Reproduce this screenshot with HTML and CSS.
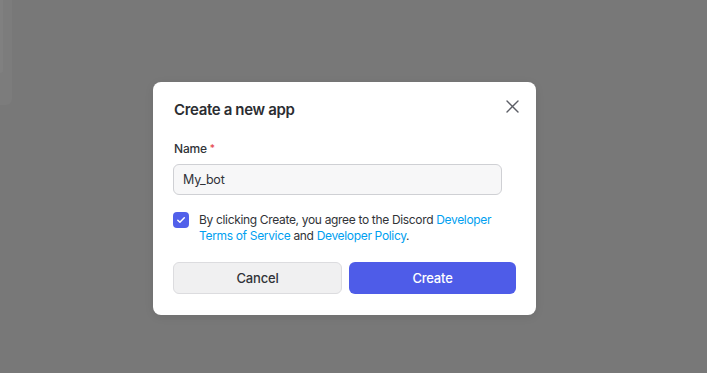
FILE: index.html
```html
<!DOCTYPE html>
<html lang="en">
<head>
  <meta charset="UTF-8" />
  <title>Create a new app</title>
  <link rel="stylesheet" href="styles.css">
</head>
<body>
  <div class="sidebar">
    <div class="sidebar-inner"></div>
  </div>

  <div class="modal">
    <div class="modal-header">
      <h2>Create a new app</h2>
      <button class="close" aria-label="Close">
        <svg width="13" height="13" viewBox="0 0 13 13">
          <path d="M1 1L12 12M12 1L1 12" stroke="#5c5e66" stroke-width="1.4" stroke-linecap="round" />
        </svg>
      </button>
    </div>

    <label class="label">Name<span class="req">*</span></label>
    <input class="name-input" type="text" value="My_bot" spellcheck="false" />

    <div class="agree">
      <span class="checkbox">
        <svg width="10" height="8" viewBox="0 0 10 8">
          <path d="M1.8 4.2L3.9 6.2L8.3 1.8" fill="none" stroke="#fff" stroke-width="1.5" stroke-linecap="round" stroke-linejoin="round" />
        </svg>
      </span>
      <p>By clicking Create, you agree to the Discord <a href="#">Developer</a><br><a href="#">Terms of Service</a> and <a href="#">Developer Policy</a>.</p>
    </div>

    <div class="actions">
      <button class="btn btn-cancel">Cancel</button>
      <button class="btn btn-create">Create</button>
    </div>
  </div>
</body>
</html>
```

FILE: styles.css
```css
* {
  margin: 0;
  padding: 0;
  box-sizing: border-box;
  font-family: 'Inter', 'Noto Sans', sans-serif;
}

body {
  background: #787878;
  color: #313338;
  height: 373px;
  overflow: hidden;
  padding: 82px 0 0 153px;
}

.sidebar {
  position: absolute;
  top: 0;
  left: 0;
  width: 12px;
  height: 105px;
  background: #7c7c7c;
  border-bottom-right-radius: 6px;
}

.sidebar-inner {
  width: 3px;
  height: 73px;
  background: #808080;
  border-bottom-right-radius: 3px;
}

.modal {
  width: 383px;
  height: 233px;
  background: #fff;
  border-radius: 8px;
  padding: 18px 20px 21px 20px;
  box-shadow: 0 2px 10px rgba(0, 0, 0, 0.08);
}

.modal-header {
  display: flex;
  justify-content: space-between;
  align-items: flex-start;
  height: 20px;
}

.modal-header h2 {
  font-size: 15px;
  font-weight: 600;
  line-height: 20px;
  color: #2b2d31;
  margin-left: 1px;
  letter-spacing: -0.35px;
}

.close {
  background: none;
  border: none;
  width: 13px;
  height: 13px;
  margin: 0 -3px 0 0;
  cursor: pointer;
  display: flex;
}

.label {
  display: block;
  margin-top: 21px;
  font-size: 12px;
  font-weight: 500;
  line-height: 16px;
  color: #313338;
  margin-left: 1px;
  letter-spacing: -0.2px;
}

.req {
  color: #e5484d;
  font-size: 10px;
  vertical-align: top;
  margin-left: 3px;
  line-height: 14px;
}

.name-input {
  display: block;
  width: 329px;
  height: 31px;
  margin-top: 7px;
  padding: 0 9px;
  font-size: 12.5px;
  letter-spacing: -0.2px;
  color: #313338;
  background: #f7f7f8;
  border: 1px solid #cfd0d4;
  border-radius: 6px;
  outline: none;
}

.agree {
  display: flex;
  align-items: flex-start;
  margin-top: 17px;
}

.checkbox {
  flex: none;
  width: 16px;
  height: 16px;
  border-radius: 4px;
  background: #5160ea;
  display: flex;
  align-items: center;
  justify-content: center;
  margin-top: 0;
}

.agree p {
  margin-left: 10px;
  font-size: 12px;
  line-height: 16px;
  letter-spacing: -0.33px;
  color: #313338;
}

.agree a {
  color: #00a0f0;
  text-decoration: none;
}

.actions {
  display: flex;
  gap: 7px;
  margin-top: 18px;
}

.btn {
  flex: 1;
  height: 32px;
  border-radius: 6px;
  font-size: 13px;
  font-weight: 500;
  letter-spacing: -0.2px;
  cursor: pointer;
}

.btn-cancel {
  background: #f0f0f1;
  border: 1px solid #dcdcdf;
  color: #313338;
}

.btn-create {
  background: #4e5ce8;
  border: none;
  color: #fff;
}
```
